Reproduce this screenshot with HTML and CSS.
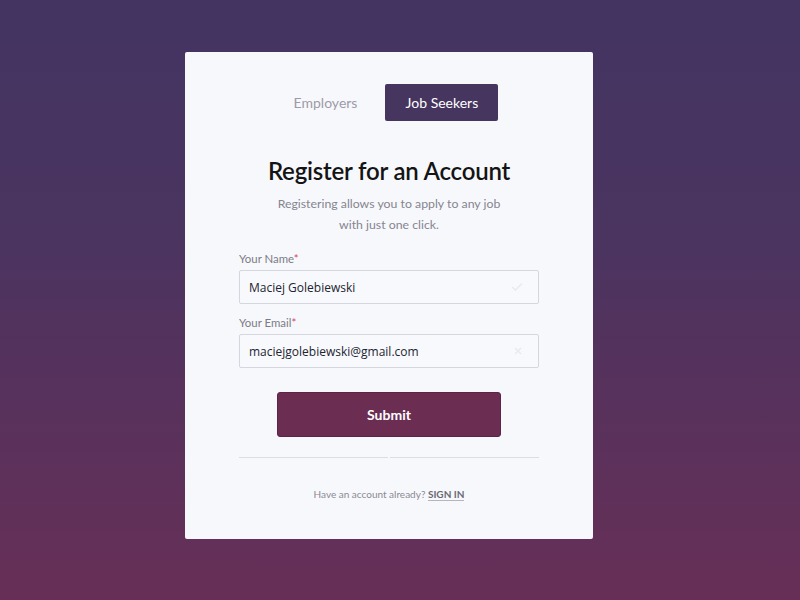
FILE: index.html
```html
<!DOCTYPE html>
<html>
<head>
<meta charset="utf-8">
<link rel="stylesheet" href="styles.css">
</head>
<body>
<div class="page">
  <div class="card">
    <div class="tabs">
      <div class="tab">Employers</div>
      <div class="tab active">Job Seekers</div>
    </div>
    <h1 class="title">Register for an Account</h1>
    <p class="subtitle">Registering allows you to apply to any job<br>with just one click.</p>
    <form class="form">
      <label class="label">Your Name<span class="req">*</span></label>
      <div class="input">
        <span class="value">Maciej Golebiewski</span>
        <svg class="icon" width="12" height="10" viewBox="0 0 12 10"><path d="M1 5 L4.5 8 L11 1.5" fill="none" stroke="#e9eaf0" stroke-width="1.5"/></svg>
      </div>
      <label class="label">Your Email<span class="req">*</span></label>
      <div class="input">
        <span class="value">maciejgolebiewski@gmail.com</span>
        <svg class="icon" width="10" height="10" viewBox="0 0 10 10"><path d="M2 2 L8 8 M8 2 L2 8" fill="none" stroke="#e9eaf0" stroke-width="1.5"/></svg>
      </div>
      <div class="actions"><button type="button" class="submit">Submit</button></div>
    </form>
    <div class="divider"><span></span><span></span></div>
    <p class="footer">Have an account already? <a class="signin">SIGN IN</a></p>
  </div>
</div>
</body>
</html>
```

FILE: styles.css
```css
html, body {
  margin: 0;
  padding: 0;
  height: 100%;
}
body {
  background: linear-gradient(to bottom, #433462 0%, #4b3460 40%, #672f57 100%);
  font-family: Lato, "Noto Sans", sans-serif;
}
.page {
  height: 600px;
  display: flex;
  justify-content: center;
  padding: 52px 22px 0 0;
  box-sizing: border-box;
}
.card {
  width: 408px;
  height: 487px;
  box-sizing: border-box;
  background: #f7f8fc;
  border-radius: 2px;
  padding: 32px 54px 0;
  display: flex;
  flex-direction: column;
  align-items: stretch;
}
.tabs {
  display: flex;
  justify-content: center;
  gap: 28px;
  margin-left: 14px;
}
.tab {
  height: 37px;
  line-height: 37px;
  font-size: 14px;
  color: #9c9ba8;
}
.tab.active {
  background: #46355f;
  color: #fff;
  width: 113px;
  text-align: center;
  border-radius: 2px;
}
.title {
  margin: 36px 0 0;
  text-align: center;
  font-size: 24px;
  font-weight: 600;
  color: #141414;
  line-height: 28px;
  letter-spacing: -0.2px;
}
.subtitle {
  margin: 8px 0 0;
  text-align: center;
  font-size: 12.3px;
  line-height: 21px;
  color: #85858f;
}
.form {
  display: flex;
  flex-direction: column;
  margin-top: 17px;
}
.label {
  font-size: 11.4px;
  color: #7b7b85;
  line-height: 14px;
  margin-bottom: 4px;
}
.req {
  color: #e0425a;
}
.input {
  height: 34px;
  box-sizing: border-box;
  border: 1px solid #d6d7de;
  border-radius: 2px;
  background: #f8f9fd;
  display: flex;
  align-items: center;
  justify-content: space-between;
  padding: 0 15px 0 9px;
  margin-bottom: 12px;
}
.value {
  font-family: "Open Sans", "Noto Sans", sans-serif;
  font-size: 12px;
  color: #222530;
}
.actions {
  display: flex;
  justify-content: center;
  margin-top: 12px;
}
.submit {
  width: 224px;
  height: 45px;
  background: #6b2d52;
  border: 1px solid #5e2446;
  border-radius: 3px;
  color: #fff;
  font-family: Lato, sans-serif;
  font-size: 14px;
  font-weight: 700;
}
.divider {
  margin-top: 20px;
  display: flex;
  gap: 2px;
}
.divider span {
  flex: 1;
  height: 1px;
  background: #dcdce3;
}
.footer {
  margin: 30px 0 0;
  text-align: center;
  font-size: 10px;
  color: #8a8a94;
}
.signin {
  color: #6a6a74;
  font-weight: 700;
  border-bottom: 1px solid #b5b5bd;
}
```
